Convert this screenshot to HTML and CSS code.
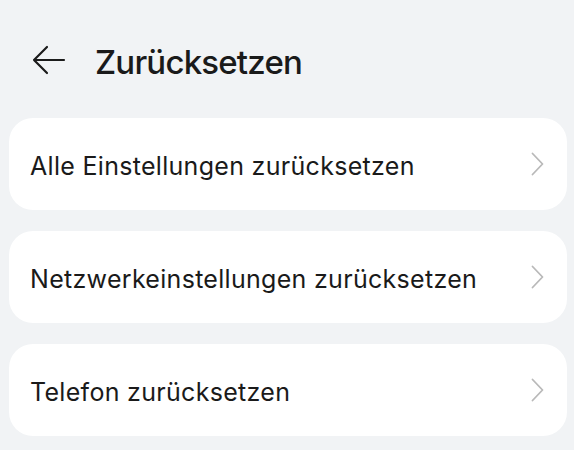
FILE: index.html
```html
<!DOCTYPE html>
<html lang="de">
<head>
<meta charset="utf-8">
<link rel="stylesheet" href="styles.css">
</head>
<body>
<div class="page">
  <header class="header">
    <svg class="back" width="34" height="30" viewBox="0 0 34 30" aria-hidden="true">
      <path d="M32 15H2M15 2L2 15L15 28" fill="none" stroke="#1b1b1b" stroke-width="2.2" stroke-linecap="round" stroke-linejoin="round"/>
    </svg>
    <h1 class="title">Zurücksetzen</h1>
  </header>
  <main class="list">
    <div class="card">
      <span class="label">Alle Einstellungen zurücksetzen</span>
      <svg class="chev" width="13" height="24" viewBox="0 0 13 24" aria-hidden="true"><path d="M1.5 1.5L11.5 12L1.5 22.5" fill="none" stroke="#b9b9b9" stroke-width="1.8" stroke-linecap="round" stroke-linejoin="round"/></svg>
    </div>
    <div class="card">
      <span class="label">Netzwerkeinstellungen zurücksetzen</span>
      <svg class="chev" width="13" height="24" viewBox="0 0 13 24" aria-hidden="true"><path d="M1.5 1.5L11.5 12L1.5 22.5" fill="none" stroke="#b9b9b9" stroke-width="1.8" stroke-linecap="round" stroke-linejoin="round"/></svg>
    </div>
    <div class="card">
      <span class="label">Telefon zurücksetzen</span>
      <svg class="chev" width="13" height="24" viewBox="0 0 13 24" aria-hidden="true"><path d="M1.5 1.5L11.5 12L1.5 22.5" fill="none" stroke="#b9b9b9" stroke-width="1.8" stroke-linecap="round" stroke-linejoin="round"/></svg>
    </div>
  </main>
</div>
</body>
</html>
```
FILE: styles.css
```css
html, body {
  margin: 0;
  padding: 0;
  background: #f1f3f5;
}
body {
  font-family: Inter, "Noto Sans", sans-serif;
  color: #1a1a1a;
  width: 574px;
  height: 450px;
  overflow: hidden;
}
.header {
  display: flex;
  align-items: center;
  height: 118px;
  padding-left: 32px;
  padding-top: 2px;
  box-sizing: border-box;
}
.back {
  display: block;
  flex: none;
}
.title {
  margin: 0 0 0 29px;
  font-size: 33px;
  font-weight: 500;
  letter-spacing: -0.8px;
  line-height: 1;
  padding-top: 4px;
}
.list {
  display: flex;
  flex-direction: column;
  gap: 21px;
  margin: 0 7px 0 9px;
}
.card {
  display: flex;
  align-items: center;
  justify-content: space-between;
  height: 92px;
  background: #ffffff;
  border-radius: 24px;
  padding: 0 23px 0 21px;
}
.label {
  font-size: 25px;
  font-weight: 400;
  letter-spacing: 0.3px;
  padding-top: 3px;
}
.chev {
  display: block;
  flex: none;
}
```
